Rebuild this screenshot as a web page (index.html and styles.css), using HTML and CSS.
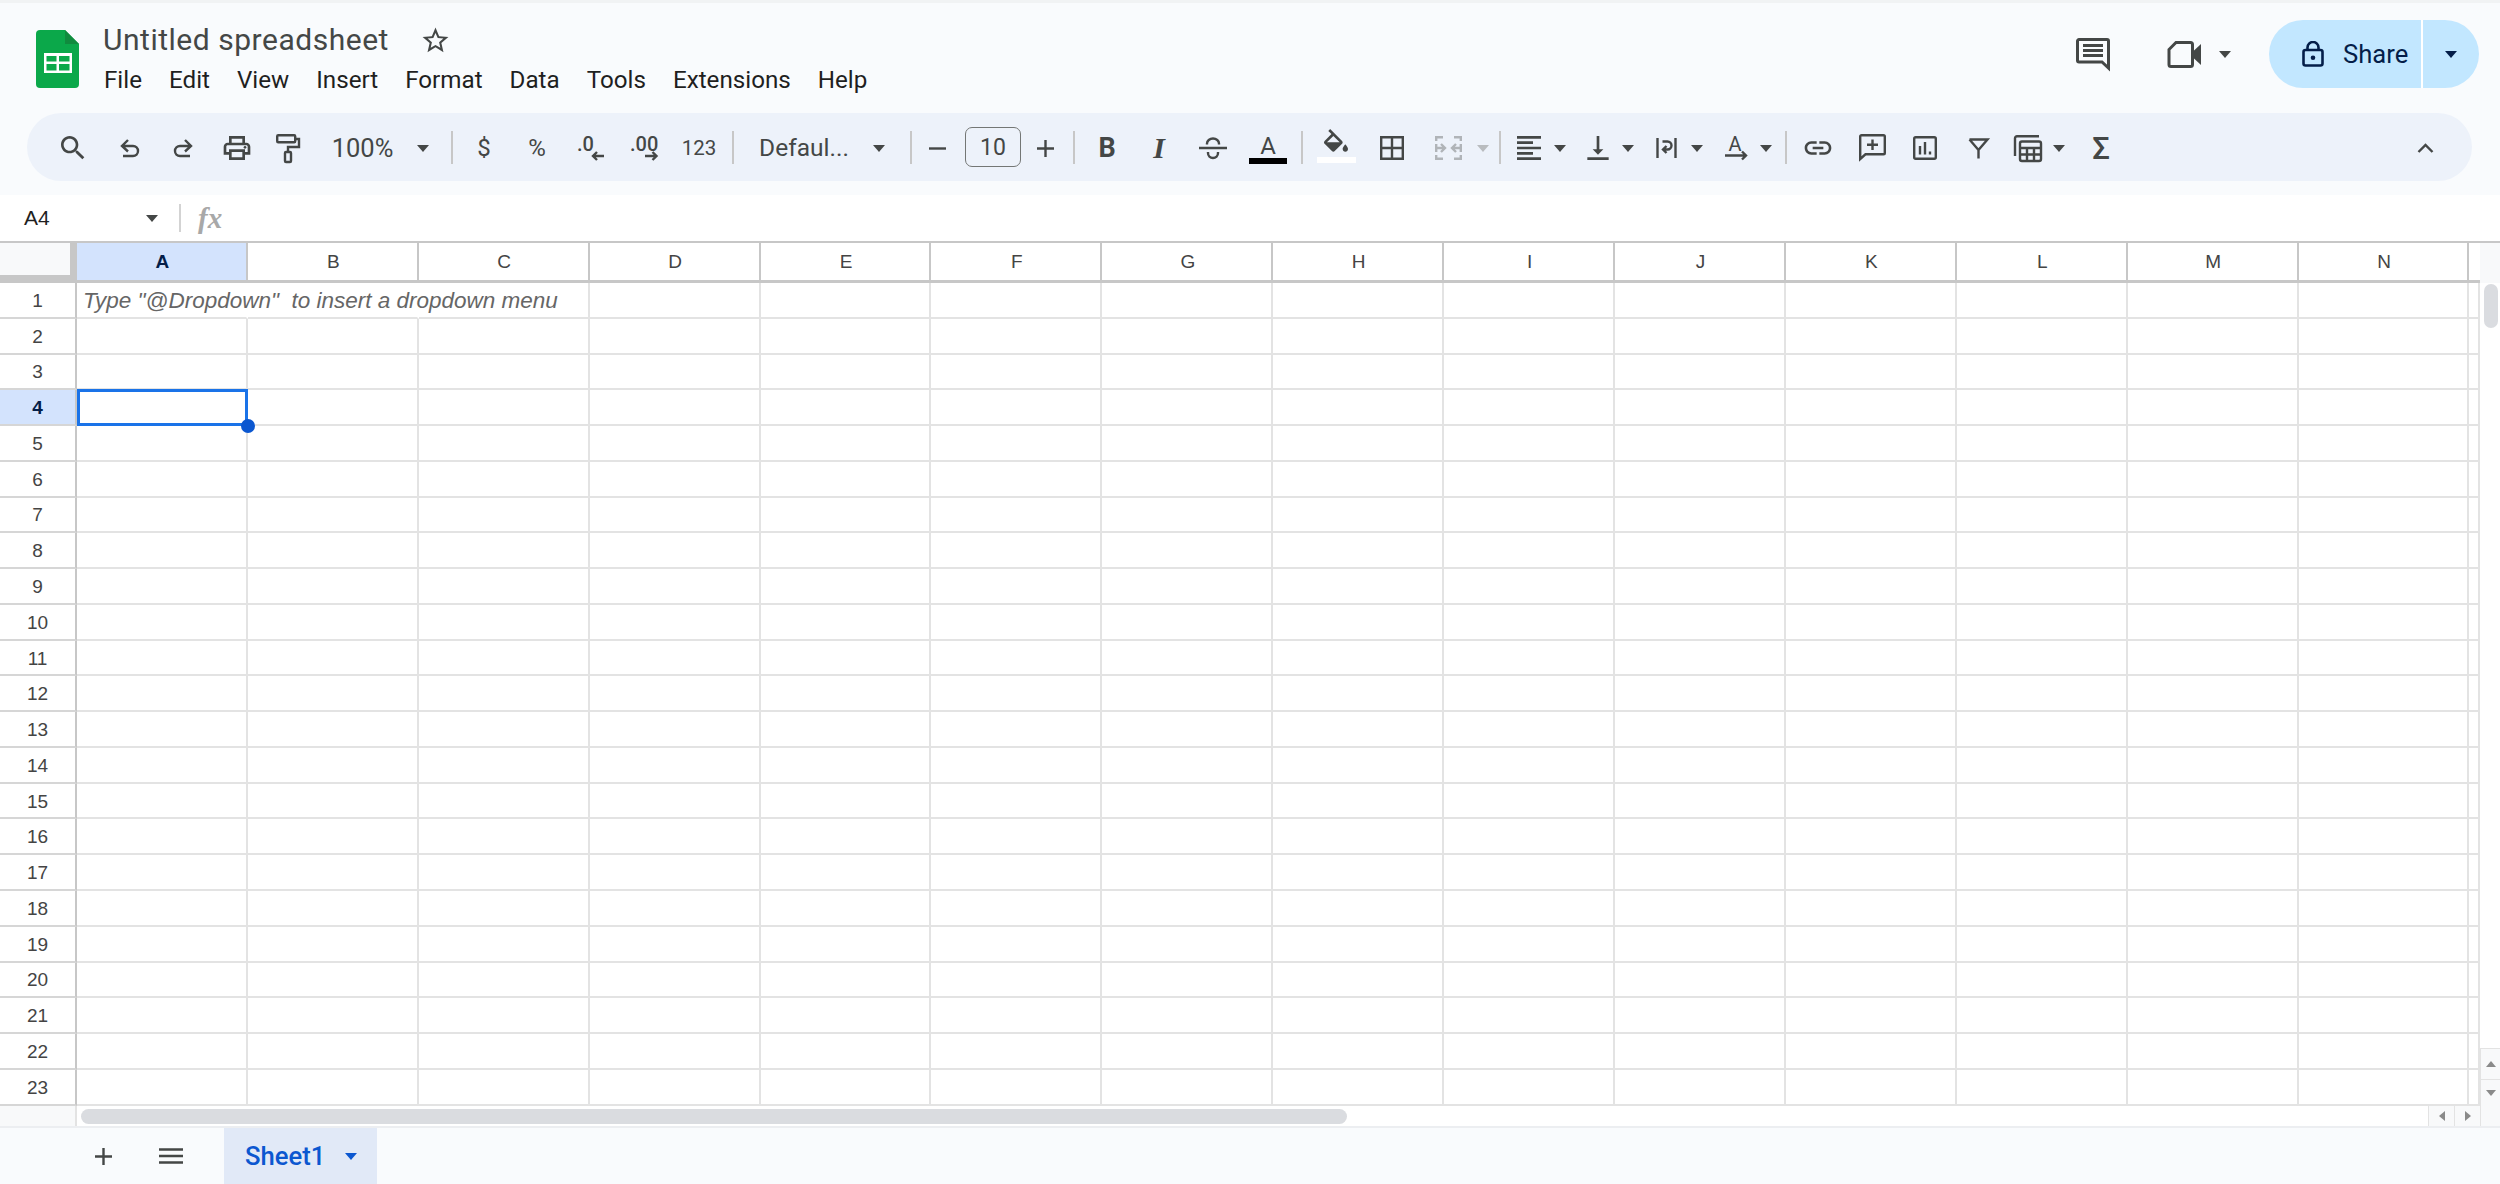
FILE: index.html
```html
<!DOCTYPE html>
<html lang="en">
<head>
<meta charset="utf-8">
<title>Untitled spreadsheet</title>
<link rel="stylesheet" href="styles.css">
</head>
<body>
<div class="app">
  <header class="chrome">
    <div class="titlebar">
      <svg class="logo" width="43" height="58" viewBox="0 0 43 58"><path fill="#0ba84a" d="M4 0H29L43 14V54a4 4 0 0 1-4 4H4a4 4 0 0 1-4-4V4a4 4 0 0 1 4-4Z"/><path fill="#108b3e" d="M29 0L43 14H29Z"/><rect fill="#fff" x="8" y="23" width="28" height="20"/><path fill="#0ba84a" d="M10.5 26h10v5.5h-10zM23 26h10.5v5.5H23zM10.5 34h10v6.5h-10zM23 34h10.5v6.5H23z"/></svg>
      <div class="docinfo">
        <div class="docname">
          <span class="doctitle">Untitled spreadsheet</span>
          <svg class="star" width="31" height="31" viewBox="0 0 24 24"><path fill="#444746" d="M22 9.24l-7.19-.62L12 2 9.19 8.63 2 9.24l5.46 4.73L5.82 21 12 17.27 18.18 21l-1.63-7.03L22 9.24zM12 15.4l-3.76 2.27 1-4.28-3.32-2.88 4.38-.38L12 6.1l1.71 4.04 4.38.38-3.32 2.88 1 4.28L12 15.4z"/></svg>
        </div>
        <nav class="menu"><span>File</span><span>Edit</span><span>View</span><span>Insert</span><span>Format</span><span>Data</span><span>Tools</span><span>Extensions</span><span>Help</span></nav>
      </div>
      <div class="actions">
        <svg class="ic comments" width="34" height="33" viewBox="0 0 34 33"><path d="M3 1.5H31a1.5 1.5 0 0 1 1.5 1.5V30L26 24H3a1.5 1.5 0 0 1-1.5-1.5V3A1.5 1.5 0 0 1 3 1.5Z"/><path d="M7 7.5H27M7 12.5H27M7 17.5H27"/></svg>
        <svg class="ic meet" width="34" height="27" viewBox="0 0 34 27"><path d="M9 1.5H23.5a2 2 0 0 1 2 2V23.5a2 2 0 0 1-2 2H4a2 2 0 0 1-2-2V8.5Z"/><path class="fi" d="M27 9.5L34 3V24L27 17.500Z"/></svg>
        <i class="caret meetcaret"></i>
        <div class="share">
          <div class="sharemain">
            <svg class="lock" width="22" height="26" viewBox="0 0 22 26"><rect x="1.500" y="9" width="19" height="15.500" rx="2"/><path d="M5.500 9V6.500a5.500 5.500 0 0 1 11 0V9"/><circle class="dot" cx="11" cy="16.700" r="2.300"/></svg>
            <span>Share</span>
          </div>
          <div class="sharemore"><i class="caret dark"></i></div>
        </div>
      </div>
    </div>
    <div class="toolbar">
      <button class="tool w52"><svg width="32" height="32" viewBox="0 0 24 24"><path class="fi" d="M15.500 14h-.79l-.28-.27C15.410 12.590 16 11.110 16 9.500 16 5.910 13.090 3 9.500 3S3 5.910 3 9.500 5.910 16 9.500 16c1.610 0 3.090-.59 4.230-1.570l.27.28v.79l5 4.990L20.490 19l-4.990-5zm-6 0C7.010 14 5 11.990 5 9.500S7.010 5 9.500 5 14 7.010 14 9.500 11.990 14 9.500 14z"/></svg></button>
      <button class="tool w62"><svg class="ic" width="20" height="18" viewBox="0 0 20 18"><path d="M8 1L2 7L8 12.500M2 7H13a5 5 0 0 1 0 10H3"/></svg></button>
      <button class="tool w44"><svg class="ic" width="20" height="18" viewBox="0 0 20 18"><path d="M12 1L18 7L12 12.500M18 7H7a5 5 0 0 0 0 10H17"/></svg></button>
      <button class="tool w63"><svg width="32" height="32" viewBox="0 0 24 24"><path class="fi" d="M19 8h-1V3H6v5H5c-1.660 0-3 1.340-3 3v6h4v4h12v-4h4v-6c0-1.660-1.340-3-3-3zM8 5h8v3H8V5zm8 12v2H8v-4h8v2zm2-2v-2H6v2H4v-4c0-.55.45-1 1-1h14c.55 0 1 .45 1 1v4h-2z"/><circle class="fi" cx="18" cy="11.500" r="1"/></svg></button>
      <button class="tool w40"><svg class="ic" width="24" height="29" viewBox="0 0 24 29"><rect x="1.200" y="1.200" width="18" height="7" rx="1"/><path d="M19 5H23V13H12V18"/><rect x="9" y="18" width="6" height="10" rx="1"/></svg></button>
      <button class="tool w109 zoomval">100%</button>
      <button class="tool w12"><i class="caret"></i></button>
      <div class="sep w46"></div>
      <button class="tool w18 glyph">$</button>
      <button class="tool w88 glyph">%</button>
      <button class="tool w20"><svg class="ic" width="28" height="27" viewBox="0 0 28 27"><text x="0" y="16" class="dec">.0</text><path d="M27 21H16M20 17L16 21L20 25"/></svg></button>
      <button class="tool w86"><svg class="ic" width="28" height="27" viewBox="0 0 28 27"><text x="0" y="16" class="dec">.00</text><path d="M15 21H26.500M22.500 17L26.500 21L22.500 25"/></svg></button>
      <button class="tool w24 small123">123</button>
      <div class="sep w44"></div>
      <button class="tool w98 fontname">Defaul...</button>
      <button class="tool w52"><i class="caret"></i></button>
      <div class="sep w12"></div>
      <button class="tool w40"><svg class="ic" width="17" height="3" viewBox="0 0 17 3"><path d="M0 1.500H17"/></svg></button>
      <div class="fontsize">10</div>
      <button class="tool w48"><svg class="ic" width="17" height="17" viewBox="0 0 17 17"><path d="M0 8.500H17M8.500 0V17"/></svg></button>
      <div class="sep w10"></div>
      <button class="tool w56 bold">B</button>
      <button class="tool w48 italic">I</button>
      <button class="tool w60"><svg class="ic" width="28" height="22" viewBox="0 0 28 22"><path d="M0 11H28M8 7.500V6.500a6 5 0 0 1 12 0V7.500M9 15V16a5 5 0 0 0 10 0V15"/></svg></button>
      <button class="tool w50 colorbtn"><span class="colorletter">A</span><span class="bar black"></span></button>
      <div class="sep w18"></div>
      <button class="tool w50 colorbtn"><svg class="fillicon" width="32" height="24" viewBox="0 0 24 18"><path class="fi" d="M16.560 8.940L7.620 0 6.210 1.410l2.380 2.380-5.150 5.150c-.59.59-.59 1.540 0 2.120l5.500 5.500c.29.29.68.44 1.060.44s.77-.15 1.060-.44l5.500-5.500c.59-.58.59-1.530 0-2.120zM5.210 10L10 5.210 14.790 10H5.210zM19 11.500s-2 2.170-2 3.500c0 1.100.9 2 2 2s2-.9 2-2c0-1.330-2-3.500-2-3.500z"/></svg><span class="bar white"></span></button>
      <button class="tool w62"><svg class="ic" width="24" height="24" viewBox="0 0 24 24"><path d="M1.200 1.200H22.800V22.800H1.200ZM12 1.200V22.800M1.200 12H22.800"/></svg></button>
      <button class="tool w50"><svg class="ic off" width="27" height="24" viewBox="0 0 27 24"><path d="M8 1.200H1.200V5M1.200 8V16M1.200 19V22.800H8M19 1.200H25.800V5M25.800 8V16M25.800 19V22.800H19M1 12H9M6 8L10 12L6 16M26 12H18M21 8L17 12L21 16"/></svg></button>
      <button class="tool w20"><i class="caret off"></i></button>
      <div class="sep w14"></div>
      <button class="tool w44"><svg width="32" height="32" viewBox="0 0 24 24"><path class="fi" d="M15 15H3v2h12v-2zm0-8H3v2h12V7zM3 13h18v-2H3v2zm0 8h18v-2H3v2zM3 3v2h18V3H3z"/></svg></button>
      <button class="tool w18"><i class="caret"></i></button>
      <button class="tool w42 ml8"><svg width="32" height="32" viewBox="0 0 24 24"><path class="fi" d="M16 13h-3V3h-2v10H8l4 4 4-4zM4 19v2h16v-2H4z"/></svg></button>
      <button class="tool w18"><i class="caret"></i></button>
      <button class="tool w42 ml8"><svg class="ic" width="21" height="20" viewBox="0 0 21 20"><path d="M1.500 0V20M19.500 0V20M6.500 3.500H11.500a4 4 0 0 1 0 8H7.500M10.500 8L7 11.500L10.500 15"/></svg></button>
      <button class="tool w20"><i class="caret"></i></button>
      <button class="tool w42 ml8"><svg class="ic" width="23" height="24" viewBox="0 0 23 24"><text x="10" y="15" class="rotA">A</text><path d="M0 19.500H21M17 15.500L21 19.500L17 23.500"/></svg></button>
      <button class="tool w18"><i class="caret"></i></button>
      <div class="sep w22"></div>
      <button class="tool w42"><svg width="32" height="32" viewBox="0 0 24 24"><path class="fi" d="M3.900 12c0-1.710 1.390-3.100 3.100-3.100h4V7H7c-2.760 0-5 2.240-5 5s2.240 5 5 5h4v-1.900H7c-1.710 0-3.100-1.390-3.100-3.100zM8 13h8v-2H8v2zm9-6h-4v1.900h4c1.710 0 3.100 1.390 3.100 3.100s-1.390 3.100-3.100 3.100h-4V17h4c2.760 0 5-2.240 5-5s-2.240-5-5-5z"/></svg></button>
      <button class="tool w66"><svg class="ic" width="27" height="28" viewBox="0 0 27 28"><path d="M1.200 25V2.500a1.300 1.300 0 0 1 1.300-1.300H24.500a1.300 1.300 0 0 1 1.300 1.300V19a1.300 1.300 0 0 1-1.300 1.300H6.500Z"/><path d="M13.500 5.500V16M8 10.800H19"/></svg></button>
      <button class="tool w40"><svg class="ic" width="24" height="24" viewBox="0 0 24 24"><rect x="1.200" y="1.200" width="21.600" height="21.600" rx="1.500"/><path d="M7 18.500V10M12 18.500V6M17 18.500V15.500"/></svg></button>
      <button class="tool w66"><svg class="ic" width="21" height="21" viewBox="0 0 21 21"><path d="M1.500 1.500H19.500L10.500 12V20.500M1.500 1.500L10.500 12"/></svg></button>
      <button class="tool w34"><svg class="ic" width="28" height="27" viewBox="0 0 28 27"><path d="M25 1.200H3a2 2 0 0 0-2 2V21"/><rect x="6" y="6.500" width="21" height="19.500" rx="2"/><path d="M6 13H27M6 19.500H27M13 13V26M20 13V26"/></svg></button>
      <button class="tool w28"><i class="caret"></i></button>
      <button class="tool w56 sigma">Σ</button>
      <button class="tool w40 pushright"><svg class="ic" width="17" height="10" viewBox="0 0 17 10"><path d="M1.500 9L8.500 2L15.500 9"/></svg></button>
    </div>
  </header>

  <div class="formulabar">
    <span class="namebox">A4</span>
    <i class="caret"></i>
    <div class="fxsep"></div>
    <span class="fx">fx</span>
  </div>

  <div class="colhead">
    <div class="corner"></div>
    <div class="ch active">A</div><div class="ch">B</div><div class="ch">C</div><div class="ch">D</div><div class="ch">E</div><div class="ch">F</div><div class="ch">G</div><div class="ch">H</div><div class="ch">I</div><div class="ch">J</div><div class="ch">K</div><div class="ch">L</div><div class="ch">M</div><div class="ch">N</div>
    <div class="ch end"></div>
    <div class="ch gutter"></div>
  </div>

  <div class="sheetbody">
    <div class="rows">
      <div class="row"><div class="rh">1</div><span class="c noright"><span class="hint">Type "@Dropdown"&nbsp; to insert a dropdown menu</span></span><span class="c noright"></span><span class="c"></span><span class="c"></span><span class="c"></span><span class="c"></span><span class="c"></span><span class="c"></span><span class="c"></span><span class="c"></span><span class="c"></span><span class="c"></span><span class="c"></span><span class="c"></span><span class="c"></span></div>
      <div class="row"><div class="rh">2</div><span class="c"></span><span class="c"></span><span class="c"></span><span class="c"></span><span class="c"></span><span class="c"></span><span class="c"></span><span class="c"></span><span class="c"></span><span class="c"></span><span class="c"></span><span class="c"></span><span class="c"></span><span class="c"></span><span class="c"></span></div>
      <div class="row"><div class="rh">3</div><span class="c"></span><span class="c"></span><span class="c"></span><span class="c"></span><span class="c"></span><span class="c"></span><span class="c"></span><span class="c"></span><span class="c"></span><span class="c"></span><span class="c"></span><span class="c"></span><span class="c"></span><span class="c"></span><span class="c"></span></div>
      <div class="row"><div class="rh active">4</div><span class="c selected"></span><span class="c"></span><span class="c"></span><span class="c"></span><span class="c"></span><span class="c"></span><span class="c"></span><span class="c"></span><span class="c"></span><span class="c"></span><span class="c"></span><span class="c"></span><span class="c"></span><span class="c"></span><span class="c"></span></div>
      <div class="row"><div class="rh">5</div><span class="c"></span><span class="c"></span><span class="c"></span><span class="c"></span><span class="c"></span><span class="c"></span><span class="c"></span><span class="c"></span><span class="c"></span><span class="c"></span><span class="c"></span><span class="c"></span><span class="c"></span><span class="c"></span><span class="c"></span></div>
      <div class="row"><div class="rh">6</div><span class="c"></span><span class="c"></span><span class="c"></span><span class="c"></span><span class="c"></span><span class="c"></span><span class="c"></span><span class="c"></span><span class="c"></span><span class="c"></span><span class="c"></span><span class="c"></span><span class="c"></span><span class="c"></span><span class="c"></span></div>
      <div class="row"><div class="rh">7</div><span class="c"></span><span class="c"></span><span class="c"></span><span class="c"></span><span class="c"></span><span class="c"></span><span class="c"></span><span class="c"></span><span class="c"></span><span class="c"></span><span class="c"></span><span class="c"></span><span class="c"></span><span class="c"></span><span class="c"></span></div>
      <div class="row"><div class="rh">8</div><span class="c"></span><span class="c"></span><span class="c"></span><span class="c"></span><span class="c"></span><span class="c"></span><span class="c"></span><span class="c"></span><span class="c"></span><span class="c"></span><span class="c"></span><span class="c"></span><span class="c"></span><span class="c"></span><span class="c"></span></div>
      <div class="row"><div class="rh">9</div><span class="c"></span><span class="c"></span><span class="c"></span><span class="c"></span><span class="c"></span><span class="c"></span><span class="c"></span><span class="c"></span><span class="c"></span><span class="c"></span><span class="c"></span><span class="c"></span><span class="c"></span><span class="c"></span><span class="c"></span></div>
      <div class="row"><div class="rh">10</div><span class="c"></span><span class="c"></span><span class="c"></span><span class="c"></span><span class="c"></span><span class="c"></span><span class="c"></span><span class="c"></span><span class="c"></span><span class="c"></span><span class="c"></span><span class="c"></span><span class="c"></span><span class="c"></span><span class="c"></span></div>
      <div class="row"><div class="rh">11</div><span class="c"></span><span class="c"></span><span class="c"></span><span class="c"></span><span class="c"></span><span class="c"></span><span class="c"></span><span class="c"></span><span class="c"></span><span class="c"></span><span class="c"></span><span class="c"></span><span class="c"></span><span class="c"></span><span class="c"></span></div>
      <div class="row"><div class="rh">12</div><span class="c"></span><span class="c"></span><span class="c"></span><span class="c"></span><span class="c"></span><span class="c"></span><span class="c"></span><span class="c"></span><span class="c"></span><span class="c"></span><span class="c"></span><span class="c"></span><span class="c"></span><span class="c"></span><span class="c"></span></div>
      <div class="row"><div class="rh">13</div><span class="c"></span><span class="c"></span><span class="c"></span><span class="c"></span><span class="c"></span><span class="c"></span><span class="c"></span><span class="c"></span><span class="c"></span><span class="c"></span><span class="c"></span><span class="c"></span><span class="c"></span><span class="c"></span><span class="c"></span></div>
      <div class="row"><div class="rh">14</div><span class="c"></span><span class="c"></span><span class="c"></span><span class="c"></span><span class="c"></span><span class="c"></span><span class="c"></span><span class="c"></span><span class="c"></span><span class="c"></span><span class="c"></span><span class="c"></span><span class="c"></span><span class="c"></span><span class="c"></span></div>
      <div class="row"><div class="rh">15</div><span class="c"></span><span class="c"></span><span class="c"></span><span class="c"></span><span class="c"></span><span class="c"></span><span class="c"></span><span class="c"></span><span class="c"></span><span class="c"></span><span class="c"></span><span class="c"></span><span class="c"></span><span class="c"></span><span class="c"></span></div>
      <div class="row"><div class="rh">16</div><span class="c"></span><span class="c"></span><span class="c"></span><span class="c"></span><span class="c"></span><span class="c"></span><span class="c"></span><span class="c"></span><span class="c"></span><span class="c"></span><span class="c"></span><span class="c"></span><span class="c"></span><span class="c"></span><span class="c"></span></div>
      <div class="row"><div class="rh">17</div><span class="c"></span><span class="c"></span><span class="c"></span><span class="c"></span><span class="c"></span><span class="c"></span><span class="c"></span><span class="c"></span><span class="c"></span><span class="c"></span><span class="c"></span><span class="c"></span><span class="c"></span><span class="c"></span><span class="c"></span></div>
      <div class="row"><div class="rh">18</div><span class="c"></span><span class="c"></span><span class="c"></span><span class="c"></span><span class="c"></span><span class="c"></span><span class="c"></span><span class="c"></span><span class="c"></span><span class="c"></span><span class="c"></span><span class="c"></span><span class="c"></span><span class="c"></span><span class="c"></span></div>
      <div class="row"><div class="rh">19</div><span class="c"></span><span class="c"></span><span class="c"></span><span class="c"></span><span class="c"></span><span class="c"></span><span class="c"></span><span class="c"></span><span class="c"></span><span class="c"></span><span class="c"></span><span class="c"></span><span class="c"></span><span class="c"></span><span class="c"></span></div>
      <div class="row"><div class="rh">20</div><span class="c"></span><span class="c"></span><span class="c"></span><span class="c"></span><span class="c"></span><span class="c"></span><span class="c"></span><span class="c"></span><span class="c"></span><span class="c"></span><span class="c"></span><span class="c"></span><span class="c"></span><span class="c"></span><span class="c"></span></div>
      <div class="row"><div class="rh">21</div><span class="c"></span><span class="c"></span><span class="c"></span><span class="c"></span><span class="c"></span><span class="c"></span><span class="c"></span><span class="c"></span><span class="c"></span><span class="c"></span><span class="c"></span><span class="c"></span><span class="c"></span><span class="c"></span><span class="c"></span></div>
      <div class="row"><div class="rh">22</div><span class="c"></span><span class="c"></span><span class="c"></span><span class="c"></span><span class="c"></span><span class="c"></span><span class="c"></span><span class="c"></span><span class="c"></span><span class="c"></span><span class="c"></span><span class="c"></span><span class="c"></span><span class="c"></span><span class="c"></span></div>
      <div class="row"><div class="rh">23</div><span class="c"></span><span class="c"></span><span class="c"></span><span class="c"></span><span class="c"></span><span class="c"></span><span class="c"></span><span class="c"></span><span class="c"></span><span class="c"></span><span class="c"></span><span class="c"></span><span class="c"></span><span class="c"></span><span class="c"></span></div>
    </div>
    <div class="vscroll">
      <div class="vthumb"></div>
      <div class="vbtn first"><i class="tri up"></i></div>
      <div class="vbtn"><i class="tri down"></i></div>
    </div>
  </div>

  <div class="hscroll">
    <div class="hleft"></div>
    <div class="htrack"><div class="hthumb"></div></div>
    <div class="hbtn"><i class="tri left"></i></div>
    <div class="hbtn"><i class="tri right"></i></div>
    <div class="hcorner"></div>
  </div>

  <footer class="sheetbar">
    <button class="tool w56"><svg class="ic" width="17" height="17" viewBox="0 0 17 17"><path d="M0 8.500H17M8.500 0V17"/></svg></button>
    <button class="tool w80"><svg class="ic" width="24" height="16" viewBox="0 0 24 16"><path d="M0 1.500H24M0 8H24M0 14.500H24"/></svg></button>
    <div class="tab"><span>Sheet1</span><i class="caret blue"></i></div>
  </footer>
</div>
</body>
</html>
```
FILE: styles.css
```css
* { box-sizing: border-box; }
html, body { margin: 0; padding: 0; background: #fff; }
.app { width: 2500px; height: 1184px; display: flex; flex-direction: column; overflow: hidden; font-family: Roboto, "Liberation Sans", sans-serif; }

/* shared icon styling */
.ic { fill: none; stroke: #444746; stroke-width: 2.4; display: block; overflow: visible; }
.ic .fi, .fi { fill: #444746; stroke: none; }
.ic text { fill: #444746; stroke: none; font-family: Roboto, sans-serif; }
.ic.off { stroke: #b0b4b8; stroke-width: 2.4; }
.caret { display: block; flex: none; width: 0; height: 0; border-left: 6.5px solid transparent; border-right: 6.5px solid transparent; border-top: 7px solid #444746; }
.caret.off { border-top-color: #b9bcbf; }
.caret.dark { border-top-color: #041e49; }
.caret.blue { border-top-color: #0b57d0; }

/* title area */
.chrome { height: 195px; flex: none; background: #f9fbfd; border-top: 3px solid #f1f3f4; }
.titlebar { height: 110px; display: flex; align-items: flex-start; padding-left: 36px; }
.logo { margin-top: 27px; flex: none; }
.docinfo { margin-left: 24px; padding-top: 17px; }
.docname { display: flex; align-items: center; height: 40px; }
.doctitle { font-size: 30px; color: #444746; letter-spacing: 0.52px; line-height: 40px; white-space: nowrap; }
.star { margin-left: 31px; flex: none; }
.menu { display: flex; gap: 27px; margin-top: 4px; font-size: 24.200px; line-height: 32px; color: #1f1f1f; padding-left: 1px; white-space: nowrap; }

.actions { margin-left: auto; display: flex; align-items: center; padding: 17px 21px 0 0; }
.comments { flex: none; stroke-width: 3; }
.meet { margin-left: 57px; flex: none; stroke-width: 3; }
.meetcaret { margin-left: 18px; margin-right: 38px; }
.share { width: 210px; height: 68px; display: flex; background: #c2e7ff; border-radius: 34px; overflow: hidden; color: #041e49; }
.sharemain { width: 154px; display: flex; align-items: center; padding-left: 33px; border-right: 2px solid #fff; font-size: 25.600px; font-weight: 400; }
.sharemain span { margin-left: 19px; }
.lock { fill: none; stroke: #041e49; stroke-width: 2.600; flex: none; }
.lock .dot { fill: #041e49; stroke: none; }
.sharemore { flex: 1; display: flex; align-items: center; justify-content: center; }

/* toolbar */
.toolbar { height: 68px; margin: 0 28px 0 27px; padding: 0 27px 0 20px; background: #edf2fa; border-radius: 34px; display: flex; align-items: center; }
.tool { flex: none; height: 68px; padding: 2px 0 0; margin: 0; border: 0; background: none; display: flex; align-items: center; justify-content: center; color: #444746; font-family: Roboto, sans-serif; overflow: visible; white-space: nowrap; }
.tool svg { flex: none; }
.sep { flex: none; height: 33px; display: flex; justify-content: center; }
.sep::before { content: ""; width: 2px; height: 100%; background: #c7c7c7; }
.w10 { width: 10px; } .w12 { width: 12px; } .w14 { width: 14px; } .w18 { width: 18px; } .w20 { width: 20px; } .w22 { width: 22px; } .w24 { width: 24px; } .w28 { width: 28px; } .w34 { width: 34px; } .w40 { width: 40px; } .w42 { width: 42px; } .w44 { width: 44px; } .w46 { width: 46px; } .w48 { width: 48px; } .w50 { width: 50px; } .w52 { width: 52px; } .w56 { width: 56px; } .w60 { width: 60px; } .w62 { width: 62px; } .w63 { width: 63px; } .w66 { width: 66px; } .w80 { width: 80px; } .w86 { width: 86px; } .w88 { width: 88px; } .w98 { width: 98px; } .w109 { width: 109px; }
.ml8 { margin-left: 8px; }
.pushright { margin-left: auto; }
.zoomval { font-size: 25.500px; }
.glyph { font-size: 24px; }
.dec { font-size: 20px; font-weight: 500; }
.rotA { font-size: 20px; text-anchor: middle; }
.small123 { font-size: 20.500px; }
.fontname { font-size: 24.500px; padding-top: 0; }
.fontsize { flex: none; width: 56px; height: 40px; margin-left: 8px; border: 1.500px solid #747775; border-radius: 7px; display: flex; align-items: center; justify-content: center; font-size: 23px; color: #444746; }
.bold { font-size: 27px; font-weight: 700; }
.italic { font-family: "Liberation Serif", serif; font-size: 30px; font-weight: 700; font-style: italic; }
.colorbtn { flex-direction: column; justify-content: flex-start; }
.colorletter { display: block; height: 24px; margin-top: 19px; font-size: 24px; line-height: 24px; }
.fillicon { margin-top: 14px; }
.bar { display: block; height: 6px; flex: none; }
.bar.black { width: 38px; margin-top: 0; background: #000; }
.bar.white { width: 39px; margin-top: 4px; background: #fff; }
.sigma { font-size: 31px; font-weight: 500; }

/* formula bar */
.formulabar { height: 46px; flex: none; display: flex; align-items: center; padding-left: 24px; background: #fff; }
.namebox { width: 122px; font-family: "Liberation Sans", sans-serif; font-size: 21px; color: #1f1f1f; }
.fxsep { width: 2px; height: 28px; margin-left: 21px; background: #d3d3d3; }
.fx { margin-left: 17px; font-family: "Liberation Serif", serif; font-style: italic; font-weight: 700; font-size: 29px; color: #a8a8a8; }

/* grid */
.colhead, .row { display: grid; grid-template-columns: 77px repeat(14, 170.900px) 1fr; }
.colhead { height: 42px; flex: none; grid-template-columns: 77px repeat(14, 170.900px) 10.400px 1fr; font-family: "Liberation Sans", sans-serif; font-size: 19px; color: #444; }
.corner { background: #f8f9fa; border-top: 2px solid #c7c7c7; border-right: 7px solid #c7c7c7; border-bottom: 8px solid #c7c7c7; }
.ch { display: flex; align-items: center; justify-content: center; padding-left: 2px; border-top: 2px solid #c7c7c7; border-right: 2px solid #c7c7c7; border-bottom: 3px solid #c7c7c7; }
.ch.active { background: #d3e3fd; color: #041e49; font-weight: 700; }
.ch.end { border-right: 0; }
.ch.gutter { border-right: 0; border-bottom: 0; background: #f8f9fa; }

.sheetbody { height: 823px; flex: none; display: flex; }
.rows { width: 2480px; flex: none; }
.row { height: 35.780px; }
.rh { display: flex; align-items: center; justify-content: center; padding-top: 2px; font-family: "Liberation Sans", sans-serif; font-size: 19px; color: #444; border-right: 2px solid #c7c7c7; border-bottom: 2px solid #d6d6d6; }
.rh.active { background: #d3e3fd; color: #041e49; font-weight: 700; }
.c { display: block; position: relative; border-right: 2px solid #e3e3e3; border-bottom: 2px solid #e3e3e3; }
.c.noright { border-right-color: transparent; }
.hint { position: absolute; left: 6px; top: 3px; font-family: "Liberation Sans", sans-serif; font-style: italic; font-size: 22.500px; line-height: 30px; color: #666; white-space: nowrap; z-index: 1; }
.c.selected::before { content: ""; position: absolute; left: 0; top: -1px; right: -2px; bottom: -2px; border: 3px solid #1a73e8; z-index: 2; }
.c.selected::after { content: ""; position: absolute; right: -9px; bottom: -9px; width: 14px; height: 14px; border-radius: 50%; background: #0b57d0; z-index: 3; }

.vscroll { flex: 1; display: flex; flex-direction: column; }
.vthumb { width: 14px; height: 44px; margin: 1px 0 0 4px; border-radius: 7px; background: #dadce0; }
.vbtn { height: 26px; display: flex; align-items: center; justify-content: center; background: #f8f9fa; border-left: 1px solid #e3e3e3; }
.vbtn.first { margin-top: auto; height: 32px; border-top: 1px solid #e3e3e3; border-bottom: 1px solid #e3e3e3; }
.tri { display: block; width: 0; height: 0; border: 5px solid transparent; }
.tri.up { border-bottom: 6px solid #8a8a8a; border-top: 0; border-left-width: 5px; }
.tri.down { border-top: 6px solid #8a8a8a; border-bottom: 0; }
.tri.left { border-right: 6px solid #8a8a8a; border-left: 0; }
.tri.right { border-left: 6px solid #8a8a8a; border-right: 0; }

.hscroll { height: 22px; flex: none; display: flex; border-bottom: 2px solid #eceef1; background: #fff; }
.hleft { width: 77px; flex: none; background: #f8f9fa; border-right: 2px solid #e3e3e3; }
.htrack { flex: 1; padding: 3px 0 0 4px; }
.hthumb { width: 1266px; height: 15px; border-radius: 8px; background: #dadce0; }
.hbtn { width: 26px; flex: none; display: flex; align-items: center; justify-content: center; background: #f8f9fa; border-left: 1px solid #e3e3e3; }
.hcorner { width: 20px; flex: none; background: #f8f9fa; border-left: 1px solid #e3e3e3; }

/* sheet tabs */
.sheetbar { flex: 1; display: flex; align-items: center; padding-left: 75px; background: #f9fbfd; }
.sheetbar .tool { height: 56px; padding: 0; }
.tab { width: 153px; height: 56px; margin-left: 13px; padding-left: 21px; display: flex; align-items: center; background: #e1e9f7; color: #0b57d0; font-size: 25.600px; font-weight: 500; white-space: nowrap; }
.tab .caret { margin-left: 20px; }
```
